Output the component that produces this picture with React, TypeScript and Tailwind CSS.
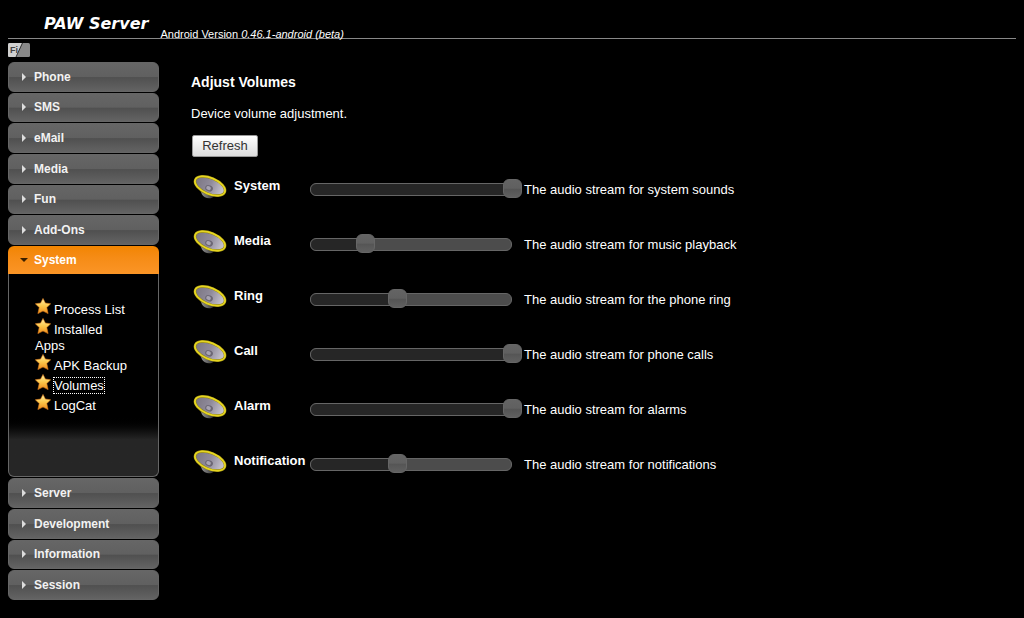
import React, { useState } from 'react';

type Stream = {
  id: string;
  name: string;
  description: string;
  volume: number;
};

const topSections = ['Phone', 'SMS', 'eMail', 'Media', 'Fun', 'Add-Ons'];
const bottomSections = ['Server', 'Development', 'Information', 'Session'];
const systemLinks = ['Process List', 'Installed Apps', 'APK Backup', 'Volumes', 'LogCat'];

const streams: Stream[] = [
  { id: 'system', name: 'System', description: 'The audio stream for system sounds', volume: 100 },
  { id: 'media', name: 'Media', description: 'The audio stream for music playback', volume: 27 },
  { id: 'ring', name: 'Ring', description: 'The audio stream for the phone ring', volume: 43 },
  { id: 'call', name: 'Call', description: 'The audio stream for phone calls', volume: 100 },
  { id: 'alarm', name: 'Alarm', description: 'The audio stream for alarms', volume: 100 },
  { id: 'notification', name: 'Notification', description: 'The audio stream for notifications', volume: 43 },
];

const StarIcon = () => (
  <svg viewBox="0 0 16 16" className="inline-block w-4 h-4 mr-[3px] align-baseline" aria-hidden="true">
    <defs>
      <linearGradient id="star" x1="0" y1="0" x2="0" y2="1">
        <stop offset="0" stopColor="#fff0a8" />
        <stop offset="0.5" stopColor="#fcc84c" />
        <stop offset="1" stopColor="#f08c1c" />
      </linearGradient>
    </defs>
    <path
      d="M8 .4l2.400 4.700 5.300.6-3.900 3.900 1.300 6L8 13l-5.100 2.600 1.300-6L.3 5.700l5.300-.6z"
      fill="url(#star)"
      stroke="#d9791a"
      strokeWidth="0.6"
      strokeLinejoin="round"
    />
  </svg>
);

const SpeakerIcon = () => (
  <svg viewBox="0 0 36 26" className="w-9 h-[26px]" aria-hidden="true">
    <defs>
      <linearGradient id="cone" x1="0" y1="0" x2="1" y2="0">
        <stop offset="0" stopColor="#7a7582" />
        <stop offset="0.5" stopColor="#918c9c" />
        <stop offset="1" stopColor="#cfccd6" />
      </linearGradient>
      <linearGradient id="magnet" x1="0" y1="0" x2="1" y2="0">
        <stop offset="0" stopColor="#9a9a9a" />
        <stop offset="0.5" stopColor="#666" />
        <stop offset="1" stopColor="#222" />
      </linearGradient>
    </defs>
    <path d="M8 15l2 5.500c1.500 2.800 5 4.200 8.500 3.700 2.500-.4 3.500-1.700 4.500-3.700z" fill="url(#magnet)" />
    <g transform="rotate(23 18 12)">
      <ellipse cx="18" cy="12" rx="16" ry="8" fill="url(#cone)" stroke="#8a7c10" strokeWidth="2.600" />
      <ellipse cx="18" cy="12" rx="16" ry="8" fill="none" stroke="#e6d622" strokeWidth="1.800" />
      <ellipse cx="18" cy="14.500" rx="4" ry="3" fill="#6c6774" />
      <ellipse cx="17.500" cy="14.500" rx="2.400" ry="1.900" fill="#a8a4b2" />
    </g>
  </svg>
);

const SectionButton: React.FC<{ title: string }> = ({ title }) => (
  <button
    type="button"
    className="flex items-center gap-2 pl-[13px] text-left text-xs font-bold text-[#f2f2f2] rounded-md border border-[#666] bg-[linear-gradient(#666_0%,#606060_49%,#505050_52%,#636363_100%)]"
  >
    <svg viewBox="0 0 4 8" className="w-1 h-2" aria-hidden="true">
      <path d="M0 0l4 4-4 4z" fill="#ddd" />
    </svg>
    {title}
  </button>
);

const Sidebar = () => (
  <nav className="w-[151px] shrink-0">
    <div className="grid auto-rows-fr gap-px h-[184px] pb-px">
      {topSections.map((title) => (
        <SectionButton key={title} title={title} />
      ))}
    </div>

    {/* Open section */}
    <button
      type="button"
      aria-expanded="true"
      className="flex items-center gap-1.5 w-full h-7 pl-3 text-left text-xs font-bold text-white rounded-t-md bg-linear-to-b from-[#f28500] to-[#fb9526]"
    >
      <svg viewBox="0 0 8 4" className="w-2 h-1" aria-hidden="true">
        <path d="M0 0h8l-4 4z" fill="#3a2000" />
      </svg>
      System
    </button>
    <div className="h-[203px] mb-px pt-6 pl-[26px] pr-6 border border-t-0 border-[#666] rounded-b-md bg-linear-to-b from-black from-70% to-[#262626] to-82%">
      <ul className="text-[13px] leading-4">
        {systemLinks.map((link) => (
          <li key={link}>
            <StarIcon />
            <a
              href="#"
              className={link === 'Volumes' ? 'outline-1 outline-dotted outline-white' : ''}
            >
              {link}
            </a>
          </li>
        ))}
      </ul>
    </div>

    <div className="grid auto-rows-fr gap-px h-[122px]">
      {bottomSections.map((title) => (
        <SectionButton key={title} title={title} />
      ))}
    </div>
  </nav>
);

const VolumeRow: React.FC<{ stream: Stream }> = ({ stream }) => {
  const [volume, setVolume] = useState<number>(stream.volume);

  return (
    <div className="flex h-[55px] items-start">
      <div className="pt-2 pl-px w-[43px] shrink-0">
        <SpeakerIcon />
      </div>
      <label htmlFor={stream.id} className="w-[76px] shrink-0 pt-3 text-[13px] leading-4 font-bold">
        {stream.name}
      </label>
      <div className="relative w-[202px] h-[13px] mt-[17px] shrink-0 rounded-md border border-[#666] bg-[#4c4c4c]">
        <div className="h-full rounded-l-md bg-[#262626]" style={{ width: `${volume}%` }} />
        <input
          id={stream.id}
          type="range"
          min={0}
          max={100}
          value={volume}
          onChange={(event) => setVolume(Number(event.target.value))}
          className="absolute -left-[10px] -top-[5px] w-[221px] h-[19px] appearance-none bg-transparent [&::-webkit-slider-thumb]:appearance-none [&::-webkit-slider-thumb]:w-[19px] [&::-webkit-slider-thumb]:h-[19px] [&::-webkit-slider-thumb]:rounded-md [&::-webkit-slider-thumb]:border [&::-webkit-slider-thumb]:border-[#666] [&::-webkit-slider-thumb]:bg-[linear-gradient(#646464_0%,#606060_48%,#555_54%,#606060_100%)]"
        />
      </div>
      <p className="ml-3 pt-4 text-[13px] leading-4">{stream.description}</p>
    </div>
  );
};

const App: React.FC = () => {
  return (
    <div className="min-h-screen bg-black px-2 pb-4 text-white font-['Liberation_Sans',Arial,sans-serif]">
      <header className="flex items-end h-[39px] border-b border-[#888] pl-9">
        <h1 className="pb-1 mr-3 text-base leading-5 font-bold italic font-['DejaVu_Sans',sans-serif]">PAW Server</h1>
        <p className="text-[11px] leading-2">
          Android Version <em>0.46.1-android (beta)</em>
        </p>
      </header>

      <div className="pt-1 h-[23px]">
        <svg viewBox="0 0 22 14" className="w-[22px] h-[14px]" aria-label="Filter">
          <rect width="22" height="14" rx="1.500" fill="#888" />
          <path d="M1.500 0H14L8 14H1.500Q0 14 0 12.500V1.500Q0 0 1.500 0z" fill="#d0d0d0" />
          <path d="M14.500 0L8 14" stroke="#333" strokeWidth="1" />
          <text x="2" y="10" fontSize="9" fontWeight="bold" fill="#444">Fi</text>
        </svg>
      </div>

      <div className="flex gap-8">
        <Sidebar />
        <main className="flex-1 pt-3">
          <h2 className="text-sm leading-4 font-bold">Adjust Volumes</h2>
          <p className="mt-4 text-[13px] leading-4">Device volume adjustment.</p>
          <button
            type="button"
            className="block mt-[13px] ml-px w-[66px] h-[22px] text-[13px] text-[#333] rounded-xs border border-[#999] bg-linear-to-b from-white to-[#ddd]"
          >
            Refresh
          </button>
          <div className="mt-[9px]">
            {streams.map((stream) => (
              <VolumeRow key={stream.id} stream={stream} />
            ))}
          </div>
        </main>
      </div>
    </div>
  );
};

export default App;
